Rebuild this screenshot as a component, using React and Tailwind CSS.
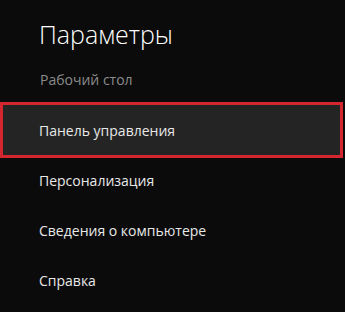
const ITEMS = ['Персонализация', 'Сведения о компьютере', 'Справка']

export default function App() {
  return (
    <div className="w-[345px] h-[312px] bg-[#0b0b0b] overflow-hidden font-['Open_Sans',sans-serif] text-[#e8e8e8]">
      {/* Header */}
      <h1 className="pl-[39px] pt-[18px] text-[25px] leading-[32px] font-light text-white">Параметры</h1>
      <div className="pl-[40px] mt-[20px] text-[14px] leading-[20px] text-[#8c8c8c]">Рабочий стол</div>

      {/* Selected item */}
      <div className="mt-[12px] mr-[2px] h-[56px] flex items-center pl-[36px] border-[3px] border-[#d3262f] bg-[#242424] text-[14px]">
        Панель управления
      </div>

      {/* Other items */}
      <div className="-mt-[3px] flex flex-col">
        {ITEMS.map(label => (
          <div key={label} className="h-[50px] flex items-center pl-[39px] text-[14px]">
            {label}
          </div>
        ))}
      </div>
    </div>
  )
}
